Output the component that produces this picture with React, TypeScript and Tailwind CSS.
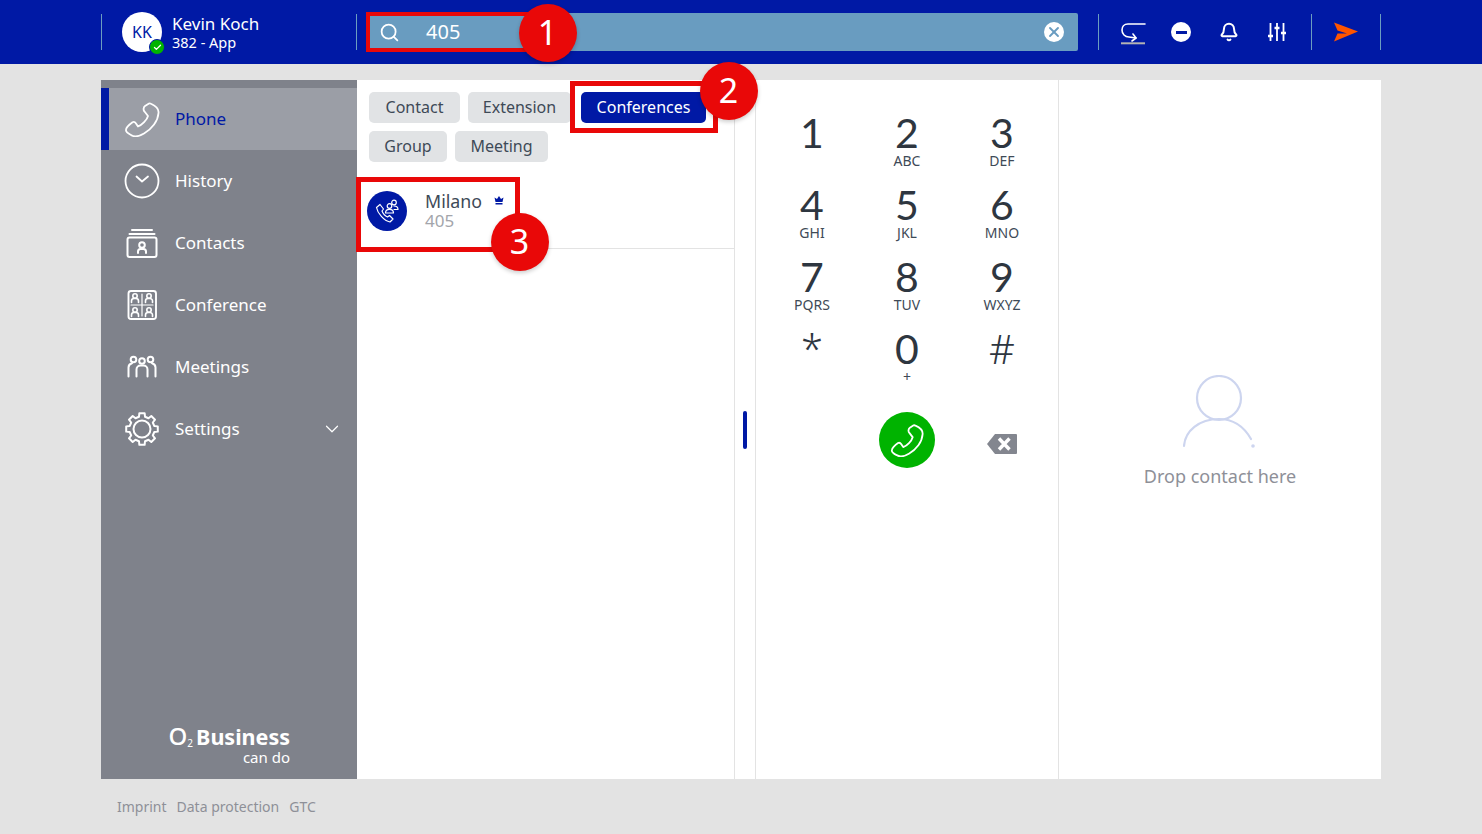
import { Bell, Check, ChevronDown, Search, X } from "lucide-react";

const font = "font-['Noto_Sans','Open_Sans',sans-serif]";

const keys = [
  { digit: "1", sub: "" },
  { digit: "2", sub: "ABC" },
  { digit: "3", sub: "DEF" },
  { digit: "4", sub: "GHI" },
  { digit: "5", sub: "JKL" },
  { digit: "6", sub: "MNO" },
  { digit: "7", sub: "PQRS" },
  { digit: "8", sub: "TUV" },
  { digit: "9", sub: "WXYZ" },
  { digit: "*", sub: "" },
  { digit: "0", sub: "+" },
  { digit: "#", sub: "" },
];

function gearPath() {
  const teeth = 8;
  const pts: string[] = [];
  for (let i = 0; i < teeth; i++) {
    const a = (i * Math.PI * 2) / teeth;
    const w = Math.PI / teeth;
    const at = (r: number, t: number) =>
      `${(18 + r * Math.sin(t)).toFixed(2)} ${(18 - r * Math.cos(t)).toFixed(2)}`;
    pts.push(at(16, a - w * 0.42), at(16, a + w * 0.42), at(12.6, a + w * 0.62), at(12.6, a + w * 1.38));
  }
  return `M${pts.join("L")}Z`;
}

function Handset({ size, stroke }: { size: number; stroke: number }) {
  return (
    <svg width={size} height={size} viewBox="0 0 36 36" fill="none" stroke="white" strokeWidth={stroke} strokeLinejoin="round">
      <path d="M21 5 25 2.500Q26 2.200 27 2.800C32 5 35 8 34.500 12 34 20 28 28 20 32.500 15 35.500 10 36 7 34 4 32.500 1.500 30.500 2 28.500 2.500 26 6 23 8.500 21.200 10 20.500 11 21 12 22.500L14 25.500C18 24 23 19 24 15L20.500 10.500C19 9 19.500 6 21 5Z" />
    </svg>
  );
}

function HistoryIcon() {
  return (
    <svg width="36" height="36" viewBox="0 0 36 36" fill="none" stroke="white" strokeWidth="1.8" strokeLinecap="round" strokeLinejoin="round">
      <circle cx="18" cy="18" r="16.500" />
      <path d="M12.500 13.500 18 18.500l6-5" />
    </svg>
  );
}

function ContactsIcon() {
  return (
    <svg width="36" height="36" viewBox="0 0 36 36" fill="none" stroke="white" strokeWidth="2" strokeLinecap="round" strokeLinejoin="round">
      <path d="M8 5h20M5.500 9h25" />
      <rect x="3.500" y="12.500" width="29" height="19.500" rx="2" />
      <circle cx="18" cy="20" r="2.800" />
      <path d="M14 28v-1.500a2.500 2.500 0 0 1 2.500-2.500h3a2.500 2.500 0 0 1 2.500 2.500V28" />
    </svg>
  );
}

function ConferenceIcon() {
  const cells = [
    [11, 10],
    [25, 10],
    [11, 24],
    [25, 24],
  ];
  return (
    <svg width="36" height="36" viewBox="0 0 36 36" fill="none" stroke="white" strokeWidth="1.600" strokeLinecap="round" strokeLinejoin="round">
      <rect x="4.500" y="4" width="27.500" height="28" rx="2.500" strokeWidth="1.900" />
      <path d="M18 7v22M7 18h22" strokeWidth="1.200" />
      {cells.map(([x, y]) => (
        <g key={`${x}-${y}`}>
          <circle cx={x} cy={y - 1} r="2.200" />
          <path d={`M${x - 3.5} ${y + 5.5}v-1.500a2.500 2.500 0 0 1 2.500-2.500h2a2.500 2.500 0 0 1 2.500 2.500V${y + 5.5}`} />
        </g>
      ))}
    </svg>
  );
}

function MeetingsIcon() {
  return (
    <svg width="36" height="36" viewBox="0 0 36 36" fill="none" stroke="white" strokeWidth="2" strokeLinecap="round" strokeLinejoin="round">
      <circle cx="9.500" cy="10.500" r="2.800" />
      <circle cx="18" cy="12" r="2.800" />
      <circle cx="26.500" cy="10.500" r="2.800" />
      <path d="M4.500 27.500v-9a4.500 4.500 0 0 1 3.500-4.300M31.500 27.500v-9a4.500 4.500 0 0 0-3.500-4.300" />
      <path d="M12.500 27.500v-7a4 4 0 0 1 4-4h3a4 4 0 0 1 4 4v7" />
    </svg>
  );
}

function SettingsIcon() {
  return (
    <svg width="36" height="36" viewBox="0 0 36 36" fill="none" stroke="white" strokeWidth="2" strokeLinejoin="round">
      <path d={gearPath()} />
      <circle cx="18" cy="18" r="8.500" />
    </svg>
  );
}

const navItems = [
  { id: "phone", label: "Phone", icon: <Handset size={36} stroke={1.8} /> },
  { id: "history", label: "History", icon: <HistoryIcon /> },
  { id: "contacts", label: "Contacts", icon: <ContactsIcon /> },
  { id: "conference", label: "Conference", icon: <ConferenceIcon /> },
  { id: "meetings", label: "Meetings", icon: <MeetingsIcon /> },
  { id: "settings", label: "Settings", icon: <SettingsIcon /> },
];

function Divider() {
  return <div className="w-px h-9 bg-[#6b9dc0] shrink-0" />;
}

function Marker({ n, className }: { n: number; className: string }) {
  return (
    <div className={`absolute w-[58px] h-[58px] pb-0.5 pr-px rounded-full bg-[#e90808] text-white text-[34px] flex items-center justify-center shadow-[0_2px_4px_rgba(0,0,0,0.2)] ${className}`}>
      {n}
    </div>
  );
}

function Chip({ label, width, active }: { label: string; width: string; active?: boolean }) {
  return (
    <div className={`h-[31px] pb-0.5 rounded-[5px] flex items-center justify-center text-base ${width} ${active ? "bg-[#0019a5] text-white" : "bg-[#e1e3e5] text-[#3e4a57]"}`}>
      {label}
    </div>
  );
}

function Header() {
  return (
    <header className="h-16 bg-[#0019a5] shrink-0 flex justify-center">
      <div className="w-[1280px] flex items-center">
        <Divider />
        <div className="relative ml-5 w-10 h-10 rounded-full bg-white text-[#0019a5] text-base flex items-center justify-center shrink-0">
          KK
          <div className="absolute left-[27px] top-[27px] w-4 h-4 rounded-full bg-[#00b300] border border-[#0019a5] flex items-center justify-center">
            <Check size={9} strokeWidth={3.5} color="white" />
          </div>
        </div>
        <div className="ml-2.5 w-[184px] text-white">
          <div className="text-[17px] leading-5">Kevin Koch</div>
          <div className="text-[14.5px] leading-[16px]">382 - App</div>
        </div>
        <Divider />
        <div className="ml-[13px] w-[708px] h-[38px] bg-[#699cc0] rounded-[2px] flex items-center pl-[9px] pr-3.5 text-white">
          <Search size={21} strokeWidth={2} />
          <span className="ml-[26px] text-xl">405</span>
          <div className="ml-auto w-5 h-5 rounded-full bg-white flex items-center justify-center">
            <X size={16} strokeWidth={2.8} color="#699cc0" />
          </div>
        </div>
        <div className="ml-5"><Divider /></div>
        <svg width="26" height="26" viewBox="0 0 26 26" fill="none" stroke="white" strokeWidth="1.600" strokeLinecap="round" strokeLinejoin="round" className="ml-[21px] shrink-0">
          <path d="M25 5H8C4 5 2 8 2 11 2 15 5 18 9 18L16 19" />
          <path d="M13 15 16 19 12 22" />
          <path d="M1 24.300h24" stroke="#b3b3b3" strokeWidth="2" strokeLinecap="butt" />
        </svg>
        <div className="ml-[25px] w-5 h-5 rounded-full bg-white flex items-center justify-center">
          <div className="w-[11px] h-[3px] bg-[#0019a5]" />
        </div>
        <Bell size={20} strokeWidth={2.4} color="white" className="ml-[28px]" />
        <div className="ml-[28px] w-5 h-5 flex items-center justify-center">
          <svg width="18" height="18" viewBox="0 0 18 18" fill="none" stroke="white">
            <path d="M2.500 0v18M9 0v18M15.500 0v18" strokeWidth="1.800" />
            <path d="M0 13h5M6.500 5h5M13 10h5" strokeWidth="2.400" />
          </svg>
        </div>
        <div className="ml-6"><Divider /></div>
        <svg width="26" height="20" viewBox="0 0 26 20" className="ml-[21px]">
          <path d="M1 0.500 25 9.500 1 19.500 4.500 11.500H14L4.500 8.500Z" fill="#ff5500" />
        </svg>
        <div className="ml-[21px]"><Divider /></div>
      </div>
    </header>
  );
}

function Sidebar() {
  return (
    <aside className="w-[256px] bg-[#7f828b] pt-2 flex flex-col shrink-0 text-white">
      {navItems.map((item) => {
        const active = item.id === "phone";
        return (
          <div
            key={item.id}
            className={`h-[62px] flex items-center text-[17px] ${active ? "bg-[#9b9ea6] border-l-8 border-[#0019a5] pl-[15px] text-[#0019a5]" : "pl-[23px]"}`}
          >
            <div className="w-9 h-9 flex items-center justify-center shrink-0">{item.icon}</div>
            <span className="ml-[15px]">{item.label}</span>
            {item.id === "settings" && <ChevronDown size={22} strokeWidth={1.3} className="ml-auto mr-3.5" />}
          </div>
        );
      })}
      <div className="mt-auto pr-[67px] pb-3.5 flex flex-col items-end">
        <div className="flex items-baseline leading-7 translate-y-px">
          <span className="text-[24px] font-medium">O</span>
          <span className="text-[10px] leading-none translate-y-0.5">2</span>
          <span className="ml-[3px] text-[21.5px] font-bold">Business</span>
        </div>
        <div className="text-[15px] leading-[15px]">can do</div>
      </div>
    </aside>
  );
}

function SearchResults() {
  return (
    <section className="w-[378px] border-r border-[#e3e3e3] shrink-0 flex flex-col">
      <div className="pl-3 pt-3 pr-2 flex flex-wrap gap-2">
        <Chip label="Contact" width="w-[91px]" />
        <Chip label="Extension" width="w-[103px]" />
        <div className="ml-0.5"><Chip label="Conferences" width="w-[125px]" active /></div>
        <Chip label="Group" width="w-[78px]" />
        <Chip label="Meeting" width="w-[93px]" />
      </div>
      <div className="mt-2 h-[79px] border-b border-[#e3e3e3] flex items-start pl-2.5 pt-[21px]">
        <div className="w-10 h-10 rounded-full bg-[#0019a5] flex items-center justify-center shrink-0">
          <svg width="26" height="26" viewBox="0 0 26 26" fill="none" stroke="white" strokeWidth="1.200" strokeLinecap="round" strokeLinejoin="round">
            <path d="M2.500 9.500 6 6.500 9.500 11 8 13C9 15.500 11 18 13.500 19L15.500 17.500 19 21 16 24C10 23 3.500 15 2.500 9.500Z" />
            <circle cx="20" cy="4.500" r="2.300" />
            <circle cx="15.500" cy="8" r="2.300" />
            <path d="M11.500 15c0-2.500 1.500-3.700 4-3.700s4 1.200 4 3.700ZM20 8c2.500 0 4 1 4 3.500h-4" />
          </svg>
        </div>
        <div className="ml-[18px]">
          <div className="flex items-center text-[17.800px] leading-[22px] text-[#3e4a57] -mt-px">
            Milano
            <svg width="10" height="9" viewBox="0 0 10 9" className="ml-3 -mt-0.5">
              <path d="M1.500 6 .500 1.500 3 3 5 0 7 3 9.500 1.500 8.500 6ZM1.500 7h7v1.500h-7Z" fill="#0019a5" />
            </svg>
          </div>
          <div className="text-[17px] leading-[18px] text-[#a3a5ab]">405</div>
        </div>
      </div>
    </section>
  );
}

function Dialpad() {
  return (
    <section className="w-[304px] border-x border-[#e3e3e3] shrink-0 flex flex-col items-center">
      <div className="mt-[33px] grid grid-cols-3 w-[285px]">
        {keys.map((key) => (
          <div key={key.digit} className="h-[72px] flex flex-col items-center text-[#2e3640]">
            <div className={`h-[39px] leading-[39px] ${key.sub === "" && key.digit !== "1" ? "text-[40px] font-light" : "text-[41px] font-normal font-['Lato',sans-serif]"}`}>
              {key.digit}
            </div>
            <div className="text-sm leading-[17px] text-[#3e4a57]">{key.sub}</div>
          </div>
        ))}
      </div>
      <div className="mt-[11px] grid grid-cols-3 w-[285px] items-center">
        <div />
        <div className="flex justify-center">
          <div className="w-14 h-14 rounded-full bg-[#00b300] flex items-center justify-center">
            <Handset size={34} stroke={1.900} />
          </div>
        </div>
        <div className="flex justify-center pt-2">
          <svg width="30" height="20" viewBox="0 0 30 20">
            <path d="M8 0h21a1 1 0 0 1 1 1v18a1 1 0 0 1-1 1H8l-8-10Z" fill="#83868f" />
            <path d="M12 4.500 22.500 15.500M22.500 4.500 12 15.500" stroke="white" strokeWidth="3.400" />
          </svg>
        </div>
      </div>
    </section>
  );
}

function DropZone() {
  return (
    <section className="flex-1 flex flex-col items-center pt-[295px]">
      <svg width="74" height="74" viewBox="0 0 74 74" fill="none" stroke="#cdd5ef" strokeWidth="2.200" strokeLinecap="round">
        <circle cx="36" cy="23" r="22" />
        <path d="M1 71C2 56 16 44 36 44c12 0 24 6 32 20" />
        <circle cx="70" cy="71" r="1.800" fill="#cdd5ef" stroke="none" />
      </svg>
      <div className="mt-[13px] text-lg text-[#8e9098]">Drop contact here</div>
    </section>
  );
}

export default function App() {
  return (
    <div className={`relative w-[1482px] h-[834px] overflow-hidden bg-[#e3e3e3] flex flex-col ${font}`}>
      <Header />
      <main className="w-[1280px] h-[699px] mx-auto mt-4 flex bg-white">
        <Sidebar />
        <SearchResults />
        <div className="w-5 shrink-0 flex items-center justify-center">
          <div className="w-1 h-[38px] rounded-sm bg-[#0019a5]" />
        </div>
        <Dialpad />
        <DropZone />
      </main>
      <footer className="w-[1280px] mx-auto pl-4 pt-[18px] flex gap-2.5 text-sm text-[#8e9098]">
        <span>Imprint</span>
        <span>Data protection</span>
        <span>GTC</span>
      </footer>

      {/* annotations drawn over the screenshot */}
      <div className="absolute left-[366px] top-3 w-[170px] h-10 border-4 border-[#e90808]" />
      <div className="absolute left-[570px] top-[81px] w-[148px] h-[52px] border-[5px] border-[#e90808]" />
      <div className="absolute left-[356px] top-[177px] w-[164px] h-[75px] border-[5px] border-[#e90808]" />
      <Marker n={1} className="left-[519px] top-1" />
      <Marker n={2} className="left-[700px] top-[62px]" />
      <Marker n={3} className="left-[491px] top-[213px]" />
    </div>
  );
}
